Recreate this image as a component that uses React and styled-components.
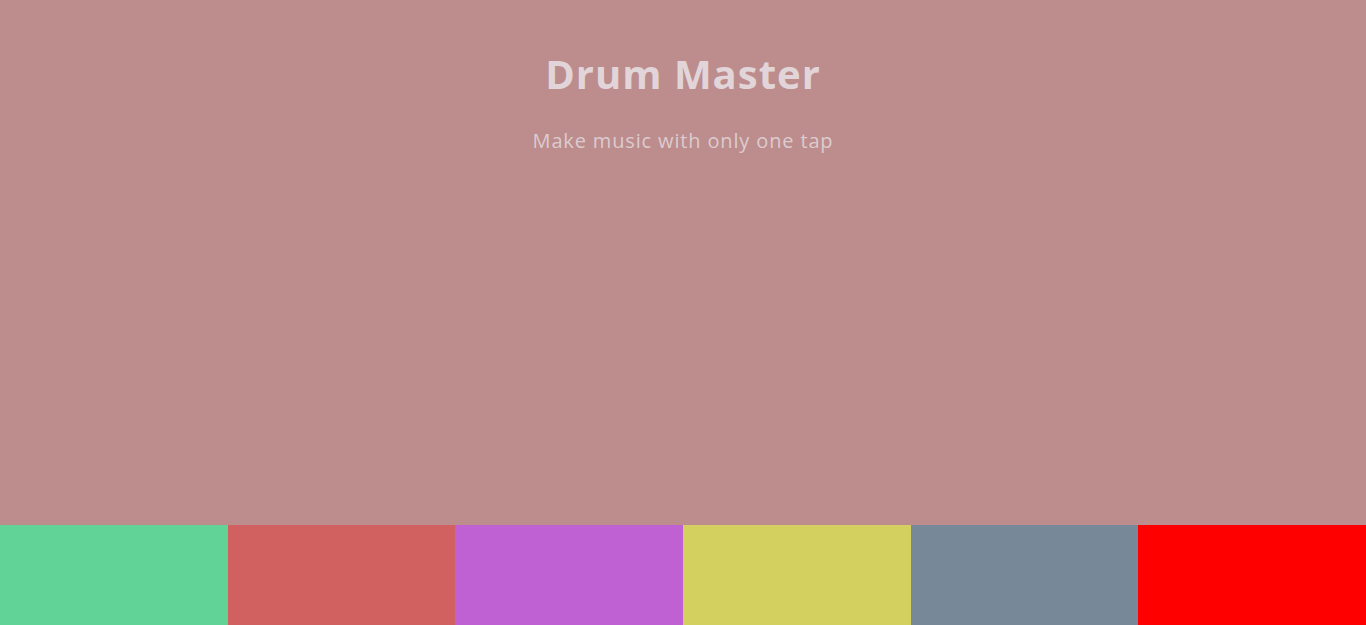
import React from "react";
import styled, { createGlobalStyle } from "styled-components";

const GlobalStyle = createGlobalStyle`
  html, body, #root {
    margin: 0;
    height: 100%;
  }
  body {
    font-family: "Open Sans", "Liberation Sans", sans-serif;
    background-color: #bc8d8c;
  }
`;

const Page = styled.div`
  height: 100vh;
  display: flex;
  flex-direction: column;
  background-color: #bc8d8c;
`;

const Header = styled.header`
  flex-grow: 1;
  display: flex;
  flex-direction: column;
  align-items: center;
  padding-top: 49px;
  color: #e2d5d9;
`;

const Title = styled.h1`
  margin: 0;
  font-size: 40px;
  font-weight: 700;
  line-height: 50px;
  letter-spacing: 1px;
`;

const Subtitle = styled.p`
  margin: 30px 0 0;
  font-size: 20px;
  line-height: 24px;
  letter-spacing: 0.85px;
  color: #dccbd0;
`;

const Pads = styled.div`
  display: flex;
  height: 100px;
`;

const Pad = styled.button`
  flex: 1;
  border: none;
  padding: 0;
  margin: 0;
  background-color: ${(props) => props.color};
  cursor: pointer;
`;

const pads = ["#62d396", "#d16060", "#c061d3", "#d4d060", "#778899", "#ff0000"];

export default function App() {
  return (
    <Page>
      <GlobalStyle />
      <Header>
        <Title>Drum Master</Title>
        <Subtitle>Make music with only one tap</Subtitle>
      </Header>
      <Pads>
        {pads.map((color) => (
          <Pad key={color} color={color} />
        ))}
      </Pads>
    </Page>
  );
}
